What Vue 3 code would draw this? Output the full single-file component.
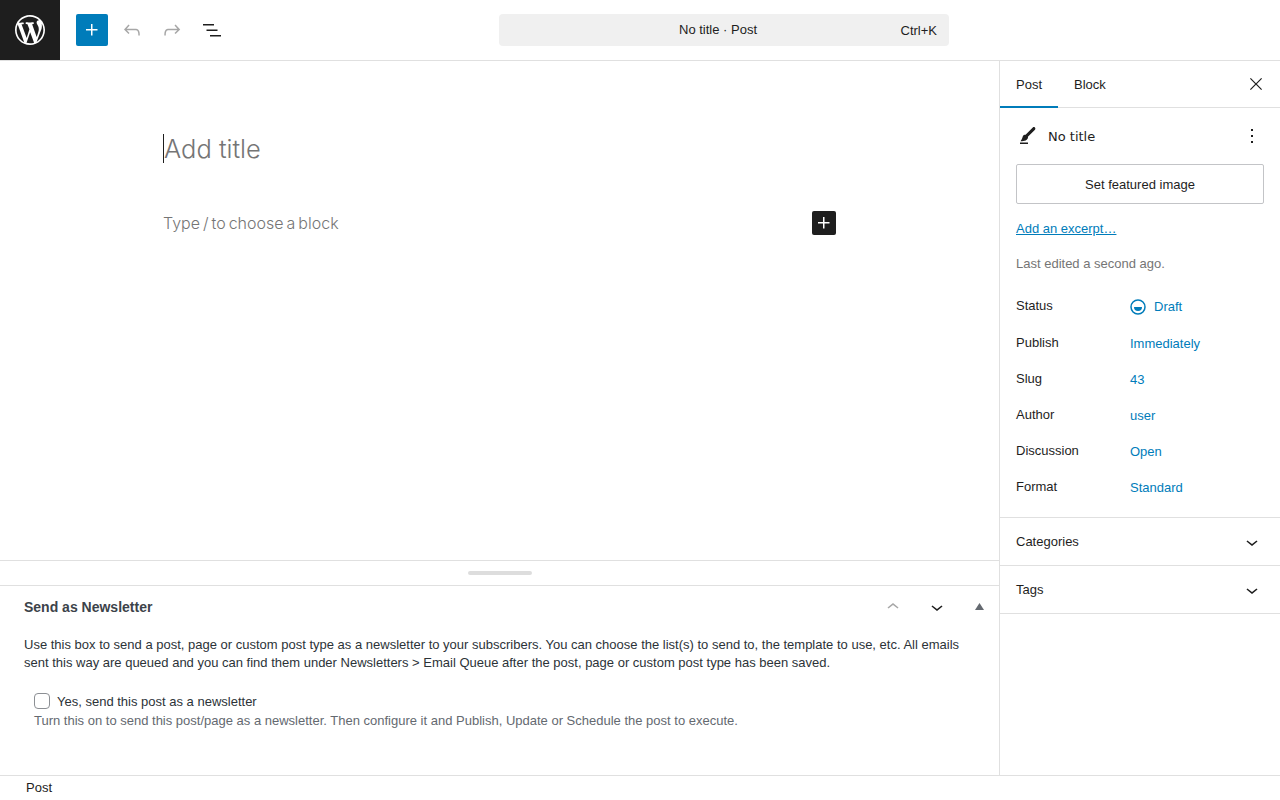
<script setup>
const rows = [
  { label: 'Publish', value: 'Immediately' },
  { label: 'Slug', value: '43' },
  { label: 'Author', value: 'user' },
  { label: 'Discussion', value: 'Open' },
  { label: 'Format', value: 'Standard' }
]
const panels = ['Categories', 'Tags']
</script>

<template>
  <div class="page">
    <header class="topbar">
      <div class="logo">
        <svg width="36" height="36" viewBox="-2 -2 24 24" fill="#fff"><path d="M20 10c0-5.51-4.5-10-10-10C4.48 0 0 4.49 0 10c0 5.52 4.48 10 10 10 5.5 0 10-4.48 10-10zM7.78 15.37L4.37 6.22c.55-.02 1.17-.08 1.17-.08.5-.06.44-1.13-.06-1.11 0 0-1.45.11-2.37.11-.18 0-.37 0-.58-.01C4.12 2.69 6.87 1.11 10 1.11c2.33 0 4.45.87 6.05 2.34-.68-.11-1.65.39-1.65 1.58 0 .74.45 1.36.9 2.1.35.61.55 1.36.55 2.46 0 1.49-1.4 5-1.4 5l-3.03-8.37c.54-.02.82-.17.82-.17.5-.05.44-1.25-.06-1.22 0 0-1.44.12-2.38.12-.87 0-2.33-.12-2.33-.12-.5-.03-.56 1.2-.06 1.22l.92.08 1.26 3.41zM17.41 10c.24-.64.74-1.87.43-4.25.7 1.29 1.05 2.71 1.05 4.25 0 3.29-1.73 6.24-4.4 7.78.97-2.59 1.94-5.2 2.92-7.78zM6.1 18.09C3.12 16.65 1.11 13.53 1.11 10c0-1.3.23-2.48.72-3.59C3.25 10.3 4.67 14.2 6.1 18.09zm4.03-6.63l2.58 6.98c-.86.29-1.76.45-2.71.45-.79 0-1.57-.11-2.29-.33.81-2.38 1.62-4.74 2.42-7.1z"/></svg>
      </div>
      <div class="tools">
        <div class="add">
          <svg width="24" height="24" viewBox="0 0 24 24" fill="#fff"><path d="M11 12.5V17.5H12.5V12.5H17.5V11H12.5V6H11V11H6V12.5H11Z"/></svg>
        </div>
        <div class="tool">
          <svg width="24" height="24" viewBox="0 0 24 24" fill="#a7a7a7"><path d="M18.3 11.7c-.6-.6-1.4-.9-2.3-.9H6.7l2.9-3.3-1.1-1-4.5 5L8.5 16l1-1-2.7-2.7H16c.5 0 .9.2 1.3.5 1 1 1 3.4 1 4.5v.3h1.5v-.2c0-1.5 0-4.3-1.5-5.7z"/></svg>
        </div>
        <div class="tool">
          <svg width="24" height="24" viewBox="0 0 24 24" fill="#a7a7a7"><path d="M15.6 6.5l-1.1 1 2.9 3.3H8c-.9 0-1.7.3-2.3.9-1.4 1.5-1.4 4.2-1.4 5.6v.2h1.5v-.3c0-1.1 0-3.5 1-4.5.3-.3.7-.5 1.3-.5h9.2L14.5 15l1.1 1.1 4.6-4.6-4.6-5z"/></svg>
        </div>
        <div class="tool">
          <svg width="24" height="24" viewBox="0 0 24 24" fill="#1e1e1e"><path d="M3 6h11v1.5H3V6Zm3.5 5.5h11V13h-11v-1.5ZM21 17H10v1.5h11V17Z"/></svg>
        </div>
      </div>
      <div class="command">
        <span class="command-title">No title · Post</span>
        <span class="command-key">Ctrl+K</span>
      </div>
    </header>

    <div class="body">
      <main class="main">
        <section class="canvas">
          <div class="title-wrap"><span class="title">Add title</span></div>
          <div class="block-row">
            <span class="placeholder">Type / to choose a block</span>
            <span class="inserter">
              <svg width="24" height="24" viewBox="0 0 24 24" fill="#fff"><path d="M11 12.5V17.5H12.5V12.5H17.5V11H12.5V6H11V11H6V12.5H11Z"/></svg>
            </span>
          </div>
        </section>
        <div class="resizer"><span class="handle"></span></div>
        <section class="meta">
          <div class="meta-head">
            <h2 class="meta-title">Send as Newsletter</h2>
            <div class="meta-actions">
              <svg width="24" height="24" viewBox="0 0 24 24" fill="#a7a7a7"><path d="M6.5 12.4L12 8l5.5 4.4-.9 1.2L12 10l-4.5 3.6-1-1.2z"/></svg>
              <svg width="24" height="24" viewBox="0 0 24 24" fill="#1e1e1e"><path d="M17.5 11.6L12 16l-5.5-4.4.9-1.2L12 14l4.5-3.6 1 1.2z"/></svg>
              <svg class="tri" width="9" height="7" viewBox="0 0 9 7" fill="#646970"><path d="M4.5 0L9 7H0z"/></svg>
            </div>
          </div>
          <p class="meta-desc">Use this box to send a post, page or custom post type as a newsletter to your subscribers. You can choose the list(s) to send to, the template to use, etc. All emails sent this way are queued and you can find them under Newsletters &gt; Email Queue after the post, page or custom post type has been saved.</p>
          <div class="meta-field">
            <label class="check-row"><span class="check"></span><span>Yes, send this post as a newsletter</span></label>
            <p class="help">Turn this on to send this post/page as a newsletter. Then configure it and Publish, Update or Schedule the post to execute.</p>
          </div>
        </section>
      </main>

      <aside class="sidebar">
        <div class="tabs">
          <span class="tab active">Post</span>
          <span class="tab">Block</span>
          <svg class="close" width="24" height="24" viewBox="0 0 24 24" fill="#1e1e1e"><path d="m13.06 12 6.47-6.47-1.06-1.06L12 10.94 5.53 4.47 4.47 5.53 10.94 12l-6.47 6.47 1.06 1.06L12 13.06l6.47 6.47 1.06-1.06L13.06 12Z" transform="translate(12 12) scale(.8) translate(-12 -12)"/></svg>
        </div>
        <div class="summary">
          <div class="doc-row">
            <svg width="24" height="24" viewBox="0 0 24 24" fill="#1e1e1e"><path d="M4 20h8v-1.5H4V20zM18.9 3.5c-.6-.6-1.5-.6-2.1 0l-7.2 7.2c-.4-.1-.7 0-1.1.1-.5.2-1.5.7-1.9 2.2-.4 1.7-.8 2.2-1.1 2.7-.1.1-.2.3-.3.4l-.6 1.1H6c2 0 3.4-.4 4.7-1.4.8-.6 1.2-1.4 1.3-2.3 0-.3 0-.5-.1-.7L19 5.7c.5-.6.5-1.6-.1-2.2z"/></svg>
            <span class="doc-title">No title</span>
            <svg class="more" width="24" height="24" viewBox="0 0 24 24" fill="#1e1e1e"><path d="M13 19h-2v-2h2v2zm0-6h-2v-2h2v2zm0-6h-2V5h2v2z"/></svg>
          </div>
          <div class="featured">Set featured image</div>
          <a class="excerpt">Add an excerpt…</a>
          <p class="edited">Last edited a second ago.</p>
          <div class="row status-row">
            <span class="label">Status</span>
            <span class="value status-value">
              <svg width="16" height="16" viewBox="0 0 16 16"><circle cx="8" cy="8" r="7" fill="none" stroke="#007cba" stroke-width="1.5"/><path d="M4 8h8a4 4 0 0 1-8 0z" fill="#007cba"/></svg>
              Draft
            </span>
          </div>
          <div v-for="r in rows" :key="r.label" class="row">
            <span class="label">{{ r.label }}</span>
            <span class="value">{{ r.value }}</span>
          </div>
        </div>
        <div v-for="p in panels" :key="p" class="panel">
          <span>{{ p }}</span>
          <svg width="24" height="24" viewBox="0 0 24 24" fill="#1e1e1e"><path d="M17.5 11.6L12 16l-5.5-4.4.9-1.2L12 14l4.5-3.6 1 1.2z"/></svg>
        </div>
      </aside>
    </div>

    <footer class="statusbar">Post</footer>
  </div>
</template>

<style>
html, body { margin: 0; background: #fff; overflow: hidden; }
</style>

<style scoped>
.page {
  width: 1280px;
  height: 800px;
  display: flex;
  flex-direction: column;
  overflow: hidden;
  background: #fff;
  color: #1e1e1e;
  font-family: "Liberation Sans", Arial, sans-serif;
  font-size: 13px;
}
.topbar {
  height: 60px;
  flex: none;
  display: flex;
  align-items: center;
  box-sizing: content-box;
  border-bottom: 1px solid #e0e0e0;
}
.logo {
  width: 60px;
  height: 60px;
  flex: none;
  background: #1e1e1e;
  display: flex;
  align-items: center;
  justify-content: center;
}
.tools {
  display: flex;
  align-items: center;
  padding-left: 16px;
  width: 439px;
  box-sizing: border-box;
  flex: none;
}
.add {
  width: 32px;
  height: 32px;
  margin-right: 4px;
  background: #007cba;
  border-radius: 2px;
  display: flex;
  align-items: center;
  justify-content: center;
}
.tool {
  width: 40px;
  height: 32px;
  display: flex;
  align-items: center;
  justify-content: center;
}
.command {
  width: 450px;
  height: 32px;
  flex: none;
  box-sizing: border-box;
  background: #f0f0f0;
  border-radius: 4px;
  padding: 0 12px 0 180px;
  display: flex;
  align-items: center;
  justify-content: space-between;
}
.command-title { position: relative; top: -1px; }
.command-key { color: #1e1e1e; }
.body {
  flex: 1;
  min-height: 0;
  display: flex;
}
.main {
  width: 999px;
  flex: none;
  display: flex;
  flex-direction: column;
}
.canvas {
  height: 499px;
  flex: none;
  padding: 73px 163px 0;
  box-sizing: border-box;
  width: 1000px;
  width: 999px;
}
.title-wrap {
  height: 29px;
  display: flex;
  align-items: center;
}
.title {
  border-left: 1px solid #1e1e1e;
  font-family: Inter, sans-serif;
  font-weight: 300;
  font-size: 25.5px;
  line-height: 29px;
  color: #757575;
}
.block-row {
  margin-top: 48px;
  height: 24px;
  display: flex;
  align-items: center;
  justify-content: space-between;
}
.placeholder {
  font-family: Inter, sans-serif;
  font-weight: 300;
  font-size: 16px;
  color: #757575;
  word-spacing: -1.5px;
}
.inserter {
  width: 24px;
  height: 24px;
  background: #1e1e1e;
  border-radius: 2px;
  display: block;
}
.inserter svg { display: block; }
.resizer {
  height: 25px;
  flex: none;
  box-sizing: content-box;
  border-top: 1px solid #e0e0e0;
  border-bottom: 1px solid #e0e0e0;
  box-sizing: border-box;
  height: 26px;
  display: flex;
  align-items: center;
  justify-content: center;
}
.handle {
  width: 64px;
  height: 4px;
  border-radius: 2px;
  background: #ddd;
}
.meta {
  flex: 1;
  min-height: 0;
}
.meta-head {
  height: 42px;
  padding: 0 15px 0 24px;
  display: flex;
  align-items: center;
  justify-content: space-between;
}
.meta-title {
  margin: 0;
  font-size: 14px;
  font-weight: 700;
  color: #3c434a;
}
.meta-actions {
  display: flex;
  align-items: center;
}
.meta-actions svg { display: block; margin-left: 20px; }
.meta-actions .tri { margin-left: 26px; position: relative; top: -1px; }
.meta-desc {
  margin: 8px 24px 0;
  line-height: 18px;
  color: #2c3338;
}
.meta-field {
  margin: 20px 0 0 34px;
}
.check-row {
  display: flex;
  align-items: center;
  gap: 7px;
  height: 18px;
  color: #2c3338;
}
.check {
  width: 14px;
  height: 14px;
  border: 1px solid #8c8f94;
  border-radius: 4px;
  background: #fff;
  flex: none;
}
.help {
  margin: 2px 0 0;
  line-height: 18px;
  color: #646970;
}
.sidebar {
  width: 281px;
  flex: none;
  box-sizing: border-box;
  border-left: 1px solid #e0e0e0;
}
.tabs {
  height: 47px;
  display: flex;
  align-items: stretch;
  box-sizing: border-box;
  border-bottom: 1px solid #e0e0e0;
  position: relative;
}
.tab {
  padding: 0 16px;
  display: flex;
  align-items: center;
  position: relative;
}
.tab.active { box-shadow: inset 0 -2px 0 #007cba; margin-bottom: -1px; }
.close { margin: 0 12px 0 auto; align-self: center; position: relative; top: 0; }
.summary {
  padding: 16px 16px 15px;
  border-bottom: 1px solid #e0e0e0;
  height: 410px;
  box-sizing: border-box;
}
.doc-row {
  display: flex;
  align-items: center;
  height: 24px;
  margin-top: 0;
}
.doc-row svg:first-child { margin-left: 0; }
.doc-title {
  margin-left: 8px;
  font-family: "DejaVu Sans", sans-serif;
  font-size: 13px;
}
.more { margin-left: auto; margin-right: 0; }
.featured {
  margin-top: 16px;
  height: 40px;
  border: 1px solid #c3c4c7;
  border-radius: 2px;
  box-sizing: border-box;
  display: flex;
  align-items: center;
  justify-content: center;
}
.excerpt {
  display: block;
  margin-top: 16px;
  line-height: 18px;
  color: #007cba;
  text-decoration: underline;
}
.edited {
  margin: 17px 0 0;
  line-height: 18px;
  color: #757575;
}
.row {
  display: flex;
  height: 36px;
  align-items: flex-start;
}
.status-row { margin-top: 15px; height: 37px; padding-top: 0; }
.label { width: 114px; flex: none; line-height: 18px; padding-top: 9px; box-sizing: content-box; }
.value { color: #007cba; line-height: 18px; padding-top: 10px; }
.status-value { display: flex; align-items: center; gap: 8px; }
.panel {
  height: 48px;
  box-sizing: border-box;
  border-bottom: 1px solid #e0e0e0;
  padding: 0 16px;
  display: flex;
  align-items: center;
  justify-content: space-between;
}
.statusbar {
  height: 25px;
  flex: none;
  box-sizing: border-box;
  border-top: 1px solid #e0e0e0;
  padding-left: 26px;
  line-height: 23px;
}
</style>
